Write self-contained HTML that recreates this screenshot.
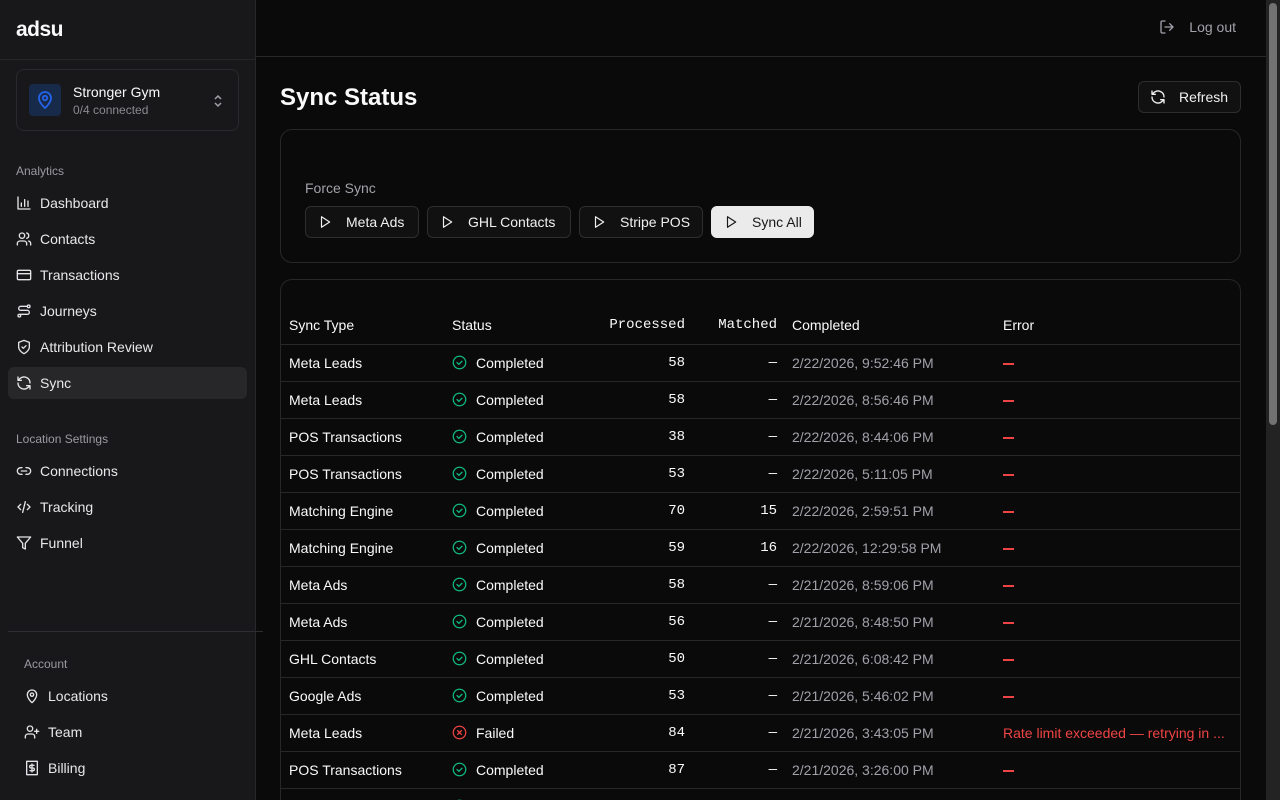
<!DOCTYPE html>
<html><head><meta charset="utf-8"><style>
*{box-sizing:border-box;margin:0;padding:0}
html,body{width:1280px;height:800px;overflow:hidden}
body{background:#0a0a0a;font-family:"Liberation Sans",sans-serif;color:#fafafa;position:relative}
.sb{position:absolute;left:0;top:0;width:256px;height:800px;background:#18181b;border-right:1px solid #27272a}
.logo{height:60px;border-bottom:1px solid #27272a;padding:18px 16px;font-size:21px;font-weight:bold;letter-spacing:-0.5px}
.loc{position:absolute;left:16px;top:69px;width:223px;height:62px;border:1px solid #2a2a2e;border-radius:8px}
.loc .ic{position:absolute;left:12px;top:14px;width:32px;height:32px;background:#172a4a;border-radius:4px}
.loc .n{position:absolute;left:56px;top:14px;font-size:14px;font-weight:500}
.loc .s{position:absolute;left:56px;top:33px;font-size:12px;color:#8a8a8f}
.grp{position:absolute;left:16px;font-size:12px;color:#9a9aa0}
.it{position:absolute;left:8px;width:239px;height:32px;display:flex;align-items:center;padding-left:8px;font-size:14px;color:#e8e8ea;border-radius:6px}
.it svg{width:16px;height:16px;margin-right:8px;fill:none;stroke:#e4e4e7;stroke-width:2;stroke-linecap:round;stroke-linejoin:round}
.it.act{background:#27272a}
.hd{position:absolute;left:256px;top:0;right:14px;height:57px;border-bottom:1px solid #27272a}
.lo{position:absolute;right:30px;top:19px;font-size:14px;color:#a1a1aa;display:flex;align-items:center;gap:14px}
.scr{position:absolute;right:0;top:0;width:14px;height:800px;background:#232323}
.thumb{position:absolute;right:3px;top:3px;width:8px;height:422px;background:#727272;border-radius:4px}
h1{position:absolute;left:280px;top:84px;font-size:24px;font-weight:bold}
.btn{position:absolute;display:flex;align-items:center;height:32px;border:1px solid #2e2e32;border-radius:6px;background:#111;font-size:14px;color:#f0f0f0}
.btn svg{fill:none;stroke:currentColor;stroke-width:2;stroke-linecap:round;stroke-linejoin:round}
.card{position:absolute;left:280px;width:961px;border:1px solid #27272a;border-radius:12px}
table{position:absolute;left:0;top:26px;width:959px;border-collapse:collapse;font-size:14px}
td,th{height:37px;border-bottom:1px solid #27272a;text-align:left;font-weight:normal;padding:0}
th{height:38px}
.m{font-family:"Liberation Mono",monospace;text-align:right}
.g{color:#a1a1aa}
.r{color:#ef4444}
.dash{display:inline-block;width:11px;height:1.5px;background:#ef4444;vertical-align:middle}
.st{display:flex;align-items:center;gap:9px}
</style></head><body>
<div class="sb">
<div class="logo">adsu</div>
<div class="loc"><div class="ic"><svg width="32" height="32" viewBox="0 0 32 32" fill="none" stroke="#2563eb" stroke-width="1.8"><path d="M16 24s-6-5-6-10a6 6 0 0 1 12 0c0 5-6 10-6 10z"/><circle cx="16" cy="14" r="2.2"/></svg></div><div class="n">Stronger Gym</div><div class="s">0/4 connected</div>
<svg style="position:absolute;left:195px;top:23px" width="12" height="16" viewBox="0 0 12 16" fill="none" stroke="#a1a1aa" stroke-width="1.5"><path d="M3 6l3-3 3 3M3 10l3 3 3-3"/></svg></div>
<div class="grp" style="top:164px">Analytics</div>
<div class="it" style="top:187px"><svg viewBox="0 0 24 24"><path d="M3 3v18h18M8 17v-5M13 17V7M18 17v-8"/></svg>Dashboard</div>
<div class="it" style="top:223px"><svg viewBox="0 0 24 24"><circle cx="9" cy="7" r="4"/><path d="M2 21v-2a4 4 0 0 1 4-4h6a4 4 0 0 1 4 4v2M16 3.1a4 4 0 0 1 0 7.8M22 21v-2a4 4 0 0 0-3-3.9"/></svg>Contacts</div>
<div class="it" style="top:259px"><svg viewBox="0 0 24 24"><rect x="2" y="5" width="20" height="14" rx="2"/><path d="M2 10h20"/></svg>Transactions</div>
<div class="it" style="top:295px"><svg viewBox="0 0 24 24"><circle cx="19" cy="5" r="2"/><circle cx="5" cy="19" r="2"/><path d="M17 5H7a3 3 0 0 0 0 6h10a3 3 0 0 1 0 6H7"/></svg>Journeys</div>
<div class="it" style="top:331px"><svg viewBox="0 0 24 24"><path d="M12 22s8-4 8-10V5l-8-3-8 3v7c0 6 8 10 8 10z"/><path d="M9 12l2 2 4-4"/></svg>Attribution Review</div>
<div class="it act" style="top:367px"><svg viewBox="0 0 24 24"><path d="M21 12a9 9 0 0 0-15-6.7L3 8M3 3v5h5M3 12a9 9 0 0 0 15 6.7l3-2.7M21 21v-5h-5"/></svg>Sync</div>
<div class="grp" style="top:432px">Location Settings</div>
<div class="it" style="top:455px"><svg viewBox="0 0 24 24"><path d="M9 17H7a5 5 0 0 1 0-10h2M15 7h2a5 5 0 0 1 0 10h-2M8 12h8"/></svg>Connections</div>
<div class="it" style="top:491px"><svg viewBox="0 0 24 24"><path d="M7 8l-4 4 4 4M17 8l4 4-4 4M14 4l-4 16"/></svg>Tracking</div>
<div class="it" style="top:527px"><svg viewBox="0 0 24 24"><path d="M22 3H2l8 9.5V19l4 2v-8.5z"/></svg>Funnel</div>
<div style="position:absolute;left:8px;top:631px;width:255px;border-top:1px solid #2e2e32"></div>
<div class="grp" style="top:657px;left:24px">Account</div>
<div class="it" style="top:680px;left:16px"><svg viewBox="0 0 24 24"><path d="M12 22s-7-6-7-12a7 7 0 0 1 14 0c0 6-7 12-7 12z"/><circle cx="12" cy="10" r="2.5"/></svg>Locations</div>
<div class="it" style="top:716px;left:16px"><svg viewBox="0 0 24 24"><circle cx="9" cy="7" r="4"/><path d="M2 21v-2a4 4 0 0 1 4-4h6a4 4 0 0 1 4 4v2M19 8v6M22 11h-6"/></svg>Team</div>
<div class="it" style="top:752px;left:16px"><svg viewBox="0 0 24 24"><path d="M4 2h16v20H4z"/><path d="M15 8h-4.5a2 2 0 0 0 0 4h3a2 2 0 0 1 0 4H9M12 6v12"/></svg>Billing</div>
</div>
<div class="hd"><div class="lo"><svg width="16" height="16" viewBox="0 0 24 24" fill="none" stroke="#a1a1aa" stroke-width="2" stroke-linecap="round" stroke-linejoin="round"><path d="M9 21H5a2 2 0 0 1-2-2V5a2 2 0 0 1 2-2h4M16 17l5-5-5-5M21 12H9"/></svg>Log out</div></div>
<div class="scr"><div class="thumb"></div></div>
<h1>Sync Status</h1>
<div class="btn" style="left:1138px;top:81px;width:103px;padding-left:11px"><svg width="16" height="16" viewBox="0 0 24 24" style="margin-right:13px"><path d="M21 12a9 9 0 0 0-15-6.7L3 8M3 3v5h5M3 12a9 9 0 0 0 15 6.7l3-2.7M21 21v-5h-5"/></svg>Refresh</div>
<div class="card" style="top:129px;height:134px">
<div style="position:absolute;left:24px;top:50px;font-size:14px;color:#a1a1aa">Force Sync</div>
</div>
<div class="btn" style="left:305px;top:206px;width:114px;padding-left:12px"><svg width="14" height="14" viewBox="0 0 24 24" style="margin-right:14px"><path d="M6 3l14 9-14 9z"/></svg>Meta Ads</div>
<div class="btn" style="left:427px;top:206px;width:144px;padding-left:12px"><svg width="14" height="14" viewBox="0 0 24 24" style="margin-right:14px"><path d="M6 3l14 9-14 9z"/></svg>GHL Contacts</div>
<div class="btn" style="left:579px;top:206px;width:124px;padding-left:12px"><svg width="14" height="14" viewBox="0 0 24 24" style="margin-right:14px"><path d="M6 3l14 9-14 9z"/></svg>Stripe POS</div>
<div class="btn" style="left:711px;top:206px;width:103px;padding-left:12px;background:#ebebeb;color:#18181b;border-color:#ebebeb"><svg width="14" height="14" viewBox="0 0 24 24" style="margin-right:14px"><path d="M6 3l14 9-14 9z"/></svg>Sync All</div>
<div class="card" style="top:279px;height:560px;overflow:hidden">
<table>
<colgroup><col style="width:171px"><col style="width:150px"><col style="width:83px"><col style="width:92px"><col style="width:226px"><col></colgroup>
<tr><th style="padding-left:8px">Sync Type</th><th>Status</th><th class="m">Processed</th><th class="m">Matched</th><th style="padding-left:15px">Completed</th><th>Error</th></tr>
</table>
</div>
<script>
const rows=[["Meta Leads",1,58,"—","2/22/2026, 9:52:46 PM"],["Meta Leads",1,58,"—","2/22/2026, 8:56:46 PM"],["POS Transactions",1,38,"—","2/22/2026, 8:44:06 PM"],["POS Transactions",1,53,"—","2/22/2026, 5:11:05 PM"],["Matching Engine",1,70,"15","2/22/2026, 2:59:51 PM"],["Matching Engine",1,59,"16","2/22/2026, 12:29:58 PM"],["Meta Ads",1,58,"—","2/21/2026, 8:59:06 PM"],["Meta Ads",1,56,"—","2/21/2026, 8:48:50 PM"],["GHL Contacts",1,50,"—","2/21/2026, 6:08:42 PM"],["Google Ads",1,53,"—","2/21/2026, 5:46:02 PM"],["Meta Leads",0,84,"—","2/21/2026, 3:43:05 PM"],["POS Transactions",1,87,"—","2/21/2026, 3:26:00 PM"],["Meta Ads",1,60,"—","2/21/2026, 2:10:00 PM"]];
const ok='<svg width="15" height="15" viewBox="0 0 24 24" fill="none" stroke="#10b981" stroke-width="2" stroke-linecap="round"><circle cx="12" cy="12" r="10"/><path d="M8 12l3 3 5-5"/></svg>';
const bad='<svg width="15" height="15" viewBox="0 0 24 24" fill="none" stroke="#ef4444" stroke-width="2" stroke-linecap="round"><circle cx="12" cy="12" r="10"/><path d="M15 9l-6 6M9 9l6 6"/></svg>';
let h='';for(const r of rows){h+=`<tr><td style="padding-left:8px">${r[0]}</td><td><div class="st">${r[1]?ok:bad}${r[1]?'Completed':'Failed'}</div></td><td class="m">${r[2]}</td><td class="m">${r[3]}</td><td class="g" style="padding-left:15px">${r[4]}</td><td class="r">${r[1]?'<span class="dash"></span>':'Rate limit exceeded — retrying in ...'}</td></tr>`}
document.querySelector('table').insertAdjacentHTML('beforeend',h);
</script>
</body></html>
